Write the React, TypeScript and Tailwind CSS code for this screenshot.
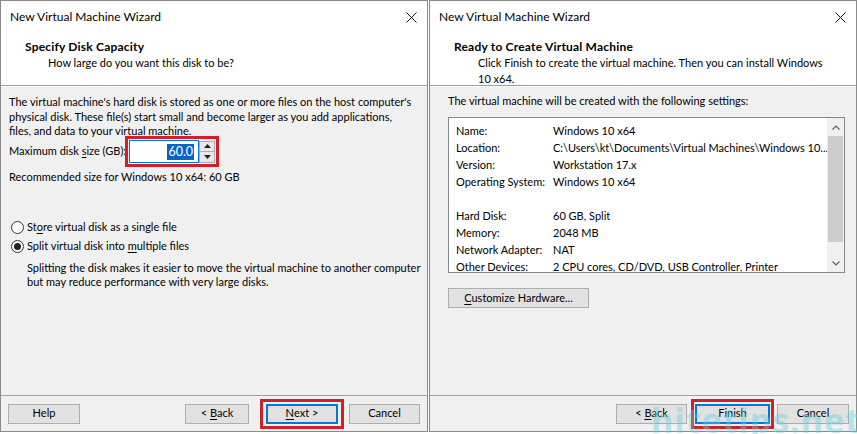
import React from "react";

function U({ children }: { children: React.ReactNode }) {
  return <span className="underline underline-offset-[2px]">{children}</span>;
}

function Btn({
  children,
  w,
  def,
}: {
  children: React.ReactNode;
  w: string;
  def?: boolean;
}) {
  return (
    <div
      className={`${w} h-[20px] flex items-center justify-center bg-[#e1e1e1] text-[11px] text-black whitespace-nowrap ${
        def ? "border-2 border-[#0078d7]" : "border border-[#adadad]"
      }`}
    >
      {children}
    </div>
  );
}

function CloseX() {
  return (
    <svg width="11" height="11" viewBox="0 0 11 11" className="block">
      <path d="M0.5 0.5 L10.5 10.5 M10.5 0.5 L0.5 10.5" stroke="#111" strokeWidth="1" fill="none" />
    </svg>
  );
}

function TitleBar() {
  return (
    <div className="h-[32px] flex items-center justify-between pl-[9px] pr-[10px] bg-white">
      <span className="text-[12px] text-black">New Virtual Machine Wizard</span>
      <CloseX />
    </div>
  );
}

function Radio({ checked, children }: { checked?: boolean; children: React.ReactNode }) {
  return (
    <div className="flex items-center h-[19px]">
      <div className="w-[13px] h-[13px] rounded-full border border-[#333] bg-white flex items-center justify-center ml-[10px] mr-[3px]">
        {checked && <div className="w-[7px] h-[7px] rounded-full bg-[#222]" />}
      </div>
      <span>{children}</span>
    </div>
  );
}

function Chevron({ up }: { up?: boolean }) {
  return (
    <svg width="8" height="5" viewBox="0 0 8 5" className="block">
      <path
        d={up ? "M0.5 4.5 L4 1 L7.5 4.5" : "M0.5 0.5 L4 4 L7.5 0.5"}
        stroke="#606060"
        strokeWidth="1.2"
        fill="none"
      />
    </svg>
  );
}

function Tri({ up }: { up?: boolean }) {
  return (
    <svg width="7" height="4" viewBox="0 0 7 4" className="block">
      <path d={up ? "M0 4 L3.5 0 L7 4 Z" : "M0 0 L3.5 4 L7 0 Z"} fill="#222" />
    </svg>
  );
}

const rows: [string, string][] = [
  ["Name:", "Windows 10 x64"],
  ["Location:", "C:\\Users\\kt\\Documents\\Virtual Machines\\Windows 10..."],
  ["Version:", "Workstation 17.x"],
  ["Operating System:", "Windows 10 x64"],
  ["", ""],
  ["Hard Disk:", "60 GB, Split"],
  ["Memory:", "2048 MB"],
  ["Network Adapter:", "NAT"],
  ["Other Devices:", "2 CPU cores, CD/DVD, USB Controller, Printer"],
];

function LeftDialog() {
  return (
    <div className="w-[428px] h-[432px] flex flex-col border border-[#8a8a8a] bg-[#f0f0f0]">
      <TitleBar />
      <div className="h-[53px] bg-white pt-[6px] border-b border-[#a0a0a0]">
        <div className="pl-[24px] h-[16px] leading-[16px] font-bold text-[12px] tracking-[0.2px]">
          Specify Disk Capacity
        </div>
        <div className="pl-[47px] h-[16px] leading-[16px] text-[11px]">How large do you want this disk to be?</div>
      </div>
      <div className="flex-1 text-[11px] leading-[14.5px] pl-[8px] pr-[14px] pt-[8px] border-t border-white">
        <p>
          The virtual machine's hard disk is stored as one or more files on the host computer's physical disk.
          These file(s) start small and become larger as you add applications, files, and data to your virtual
          machine.
        </p>
        <div className="flex items-center h-[30px] mt-[-2px]">
          <span className="mr-[-1px]">
            Maximum disk <U>s</U>ize (GB):
          </span>
          <div className="border-[3px] border-[#d0202c] flex items-center px-[1px] py-[1px]">
            <div className="w-[70px] h-[23px] border border-[#0078d7] bg-white flex items-center justify-end pr-[4px]">
              <span className="bg-[#0a64c8] text-white text-[12.5px] leading-[16px] px-[1px]">60.0</span>
            </div>
            <div className="flex flex-col">
              <div className="w-[16px] h-[11px] bg-[#e8e8e8] border border-[#adadad] flex items-center justify-center">
                <Tri up />
              </div>
              <div className="w-[16px] h-[11px] bg-[#e8e8e8] border border-[#adadad] border-t-0 flex items-center justify-center">
                <Tri />
              </div>
            </div>
          </div>
        </div>
        <div className="mt-[3px] h-[15px]">Recommended size for Windows 10 x64: 60 GB</div>
        <div className="mt-[33px] ml-[-8px]">
          <Radio>
            St<U>o</U>re virtual disk as a single file
          </Radio>
          <Radio checked>
            Split virtual disk into <U>m</U>ultiple files
          </Radio>
        </div>
        <p className="pl-[18px] mr-[-8px] mt-[5px]">
          Splitting the disk makes it easier to move the virtual machine to another computer but may reduce
          performance with very large disks.
        </p>
      </div>
      <div className="h-[36px] border-t border-[#a0a0a0] flex items-center pl-[7px]">
        <Btn w="w-[72px]">Help</Btn>
        <div className="ml-[105px]">
          <Btn w="w-[64px]">
            &lt;&nbsp;<U>B</U>ack
          </Btn>
        </div>
        <div className="ml-[11px] border-[3px] border-[#d0202c] px-[3px] py-[2px]">
          <Btn w="w-[72px]" def>
            <U>N</U>ext&nbsp;&gt;
          </Btn>
        </div>
        <div className="ml-[5px]">
          <Btn w="w-[71px]">Cancel</Btn>
        </div>
      </div>
    </div>
  );
}

function RightDialog() {
  return (
    <div className="w-[428px] h-[432px] flex flex-col border border-[#8a8a8a] bg-[#f0f0f0]">
      <TitleBar />
      <div className="h-[53px] bg-white pt-[6px] border-b border-[#a0a0a0]">
        <div className="pl-[24px] h-[16px] leading-[16px] font-bold text-[12px] tracking-[0.2px]">
          Ready to Create Virtual Machine
        </div>
        <div className="ml-[48px] w-[352px] leading-[16px] text-[11px]">
          Click Finish to create the virtual machine. Then you can install Windows 10 x64.
        </div>
      </div>
      <div className="flex-1 text-[11px] pl-[18px] pr-[11px] pt-[6px] border-t border-white">
        <div className="leading-[15px]">The virtual machine will be created with the following settings:</div>
        <div className="mt-[9px] h-[156px] border border-[#828790] bg-white flex">
          <div className="flex-1 pl-[7px] pt-[4px] overflow-hidden">
            {rows.map(([k, v], i) => (
              <div key={i} className="flex h-[17px] leading-[17px] whitespace-nowrap">
                <span className="w-[97px] shrink-0">{k}</span>
                <span>{v}</span>
              </div>
            ))}
          </div>
          <div className="w-[17px] flex flex-col bg-[#f0f0f0]">
            <div className="h-[18px] flex items-center justify-center">
              <Chevron up />
            </div>
            <div className="h-[106px] bg-[#cdcdcd] mx-[1px]" />
            <div className="flex-1" />
            <div className="h-[18px] flex items-center justify-center">
              <Chevron />
            </div>
          </div>
        </div>
        <div className="mt-[15px]">
          <Btn w="w-[141px]">
            <span>
              <U>C</U>ustomize Hardware...
            </span>
          </Btn>
        </div>
      </div>
      <div className="h-[36px] border-t border-[#a0a0a0] flex items-center justify-end pr-[7px]">
        <Btn w="w-[71px]">
          &lt;&nbsp;<U>B</U>ack
        </Btn>
        <div className="ml-[4px] border-[3px] border-[#d0202c] px-[1px] py-[2px]">
          <Btn w="w-[75px]" def>
            Finish
          </Btn>
        </div>
        <div className="ml-[3px]">
          <Btn w="w-[72px]">Cancel</Btn>
        </div>
      </div>
    </div>
  );
}

export default function App() {
  return (
    <div className="relative w-[857px] h-[434px] bg-white flex gap-[1px] text-black font-['Lato',sans-serif] overflow-hidden">
      <LeftDialog />
      <RightDialog />
      <div className="absolute right-[-4px] bottom-[-12px] text-[34px] font-bold text-[#5fd0dc] opacity-40 font-['Open_Sans',sans-serif] tracking-[1px] pointer-events-none">
        hitetips.net
      </div>
    </div>
  );
}
